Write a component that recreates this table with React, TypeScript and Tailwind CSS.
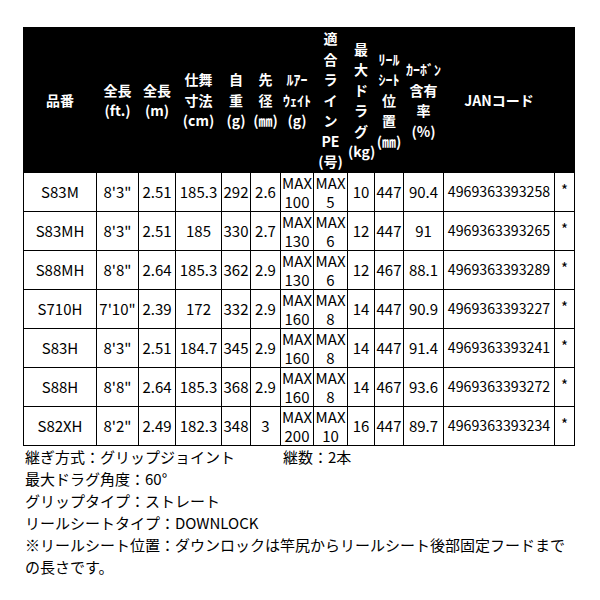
import React from 'react'

const font = { fontFamily: '"Noto Sans CJK JP", "Noto Sans", sans-serif' }

const widths = [73, 42, 37, 46, 29, 30, 33, 34, 27, 29, 40, 111, 20]

const headers: string[][] = [
  ['品番'],
  ['全長', '(ft.)'],
  ['全長', '(m)'],
  ['仕舞', '寸法', '(cm)'],
  ['自', '重', '(g)'],
  ['先', '径', '(㎜)'],
  ['ﾙｱｰ', 'ｳｪｲﾄ', '(g)'],
  ['適', '合', 'ラ', 'イ', 'ン', 'PE', '(号)'],
  ['最', '大', 'ド', 'ラ', 'グ', '(kg)'],
  ['ﾘｰﾙ', 'ｼｰﾄ', '位', '置', '(㎜)'],
  ['ｶｰﾎﾞﾝ', '含有', '率', '(%)'],
  ['JANコード'],
  [''],
]

const rows = [
  ['S83M', `8'3"`, '2.51', '185.3', '292', '2.6', '100', '5', '10', '447', '90.4', '4969363393258'],
  ['S83MH', `8'3"`, '2.51', '185', '330', '2.7', '130', '6', '12', '447', '91', '4969363393265'],
  ['S88MH', `8'8"`, '2.64', '185.3', '362', '2.9', '130', '6', '12', '467', '88.1', '4969363393289'],
  ['S710H', `7'10"`, '2.39', '172', '332', '2.9', '160', '8', '14', '447', '90.9', '4969363393227'],
  ['S83H', `8'3"`, '2.51', '184.7', '345', '2.9', '160', '8', '14', '447', '91.4', '4969363393241'],
  ['S88H', `8'8"`, '2.64', '185.3', '368', '2.9', '160', '8', '14', '467', '93.6', '4969363393272'],
  ['S82XH', `8'2"`, '2.49', '182.3', '348', '3', '200', '10', '16', '447', '89.7', '4969363393234'],
]

export default function App() {
  return (
    <div className="w-[600px] h-[600px] bg-white text-black pt-[27px] pl-[23px]" style={font}>
      <table className="table-fixed border-collapse w-[551px]">
        <colgroup>
          {widths.map((w, i) => (
            <col key={i} style={{ width: w }} />
          ))}
        </colgroup>
        <thead>
          <tr className="h-[145px] bg-black">
            {headers.map((lines, i) => (
              <th
                key={i}
                className="border border-black p-0 text-center align-middle text-white text-[14px] font-bold leading-[20.5px]"
              >
                {lines.map((l, j) => (
                  <div key={j} className="whitespace-nowrap">{l}</div>
                ))}
              </th>
            ))}
          </tr>
        </thead>
        <tbody>
          {rows.map((r) => (
            <tr key={r[0]} className="h-[39px]">
              {r.slice(0, 6).map((c, i) => (
                <td key={i} className="border border-black p-0 text-center text-[15px] whitespace-nowrap">{c}</td>
              ))}
              <td className="border border-black p-0 text-center text-[15px] leading-[19px]">
                <div>MAX</div>
                <div>{r[6]}</div>
              </td>
              <td className="border border-black p-0 text-center text-[15px] leading-[19px]">
                <div>MAX</div>
                <div>{r[7]}</div>
              </td>
              {r.slice(8, 11).map((c, i) => (
                <td key={i} className="border border-black p-0 text-center text-[15px] whitespace-nowrap">{c}</td>
              ))}
              <td className="border border-black p-0 text-center text-[14.2px] whitespace-nowrap">{r[11]}</td>
              <td className="border border-black p-0 text-center align-middle text-[15px] leading-[15px]">
                <span className="relative -top-[3px]">*</span>
              </td>
            </tr>
          ))}
        </tbody>
      </table>
      <div className="w-[551px] pl-[2px] text-[15px] leading-[22px]">
        <div className="flex">
          <span className="w-[258px]">継ぎ方式：グリップジョイント</span>
          <span>継数：2本</span>
        </div>
        <div>最大ドラグ角度：60°</div>
        <div>グリップタイプ：ストレート</div>
        <div>リールシートタイプ：DOWNLOCK</div>
        <div>※リールシート位置：ダウンロックは竿尻からリールシート後部固定フードまでの長さです。</div>
      </div>
    </div>
  )
}
